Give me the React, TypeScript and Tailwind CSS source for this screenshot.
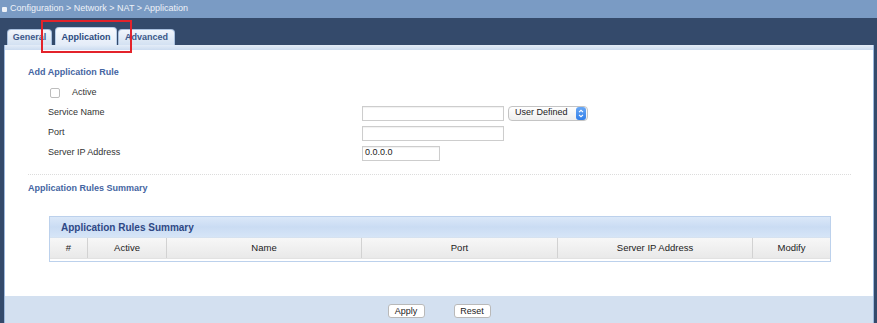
const columns = [
  { name: "#", w: "w-[38px]" },
  { name: "Active", w: "w-[79px]" },
  { name: "Name", w: "w-[195px]" },
  { name: "Port", w: "w-[196px]" },
  { name: "Server IP Address", w: "w-[195px]" },
  { name: "Modify", w: "flex-1" },
];

function TextInput({ width, value }: { width: string; value?: string }) {
  return (
    <div
      className={`${width} h-[15px] border border-[#cdcdcd] bg-white flex items-center px-[2px] text-[9px] text-[#222] shadow-[inset_0_1px_1px_rgba(0,0,0,0.06)]`}
    >
      {value}
    </div>
  );
}

function Stepper() {
  return (
    <div className="w-[10px] h-[13px] rounded-[3px] bg-gradient-to-b from-[#6aa8f5] to-[#2f7ee8] flex items-center justify-center">
      <svg width="6" height="9" viewBox="0 0 6 9" fill="none" stroke="white" strokeWidth="1.1">
        <path d="M1 3.2 L3 1.3 L5 3.2" />
        <path d="M1 5.8 L3 7.7 L5 5.8" />
      </svg>
    </div>
  );
}

function FormRow({ label, children }: { label: string; children?: React.ReactNode }) {
  return (
    <div className="h-[20px] flex items-center">
      <div className="w-[334px] pl-[20px] text-[9px] text-[#333]">{label}</div>
      {children}
    </div>
  );
}

export default function App() {
  return (
    <div className="relative w-[877px] h-[323px] bg-[#344a6b] flex flex-col font-['Liberation_Sans',Arial,sans-serif] overflow-hidden">
      {/* breadcrumb */}
      <div className="h-[18px] bg-[#7a9bc4] flex items-center pl-[2px] gap-[3px] text-[9px] text-[#eef2f8]">
        <div className="w-[5px] h-[5px] rounded-[1px] bg-[#eef2f8]" />
        <span>Configuration &gt; Network &gt; NAT &gt; Application</span>
      </div>

      {/* tabs */}
      <div className="h-[27px] flex items-end pl-[7px]">
        <div className="w-[45px] h-[16px] mr-[3px] rounded-t-[4px] border border-b-0 border-[#a9c0de] bg-gradient-to-b from-[#f1f5fb] to-[#d3e1f2] flex items-center justify-center text-[9px] font-bold text-[#3d5889]">
          General
        </div>
        <div className="w-[62px] h-[18px] mr-[1px] rounded-t-[4px] border border-b-0 border-[#b8cde8] bg-gradient-to-b from-[#f7f9fd] to-[#e4ecf8] flex items-center justify-center pt-[2px] text-[9px] font-bold text-[#2b4a7e]">
          Application
        </div>
        <div className="w-[57px] h-[16px] rounded-t-[4px] border border-b-0 border-[#a9c0de] bg-gradient-to-b from-[#f1f5fb] to-[#d3e1f2] flex items-center justify-center text-[9px] font-bold text-[#3d5889]">
          Advanced
        </div>
      </div>

      {/* panel */}
      <div className="flex-1 ml-[4px] mr-[3px] border-x border-[#9db8dc] flex flex-col">
        <div className="h-[5px] bg-gradient-to-b from-[#e4edf8] to-[#cddcf0]" />
        <div className="flex-1 bg-white pt-[12px] pl-[23px] pr-[22px]">
          <div className="h-[21px] flex items-center text-[9px] font-bold text-[#4565a2]">Add Application Rule</div>

          <div className="h-[20px] flex items-center pl-[22px]">
            <div className="w-[10px] h-[10px] rounded-[2px] border border-[#bdbdbd] bg-white" />
            <span className="ml-[12px] text-[9px] text-[#333]">Active</span>
          </div>

          <FormRow label="Service Name">
            <TextInput width="w-[142px]" />
            <div className="ml-[4px] w-[80px] h-[15px] rounded-[4px] border border-[#c4c4c4] bg-gradient-to-b from-white to-[#eeeeee] flex items-center justify-between pl-[6px] pr-px text-[9px] text-[#222]">
              <span>User Defined</span>
              <Stepper />
            </div>
          </FormRow>
          <FormRow label="Port">
            <TextInput width="w-[142px]" />
          </FormRow>
          <FormRow label="Server IP Address">
            <TextInput width="w-[78px]" value="0.0.0.0" />
          </FormRow>

          <div className="mt-[11px] border-t border-dotted border-[#dcdcdc]" />

          <div className="mt-[8px] h-[11px] flex items-center text-[9px] font-bold text-[#4565a2]">
            Application Rules Summary
          </div>

          {/* summary table */}
          <div className="mt-[22px] ml-[21px] w-[782px] border border-[#bcd1ec] bg-white">
            <div className="h-[20px] bg-gradient-to-b from-[#dbe8f8] via-[#cadcf3] to-[#d6e5f7] flex items-center pl-[11px] text-[10px] font-bold text-[#2e4885]">
              Application Rules Summary
            </div>
            <div className="h-[21px] flex border-t border-[#d6e2f0] bg-gradient-to-b from-[#f7f7f7] to-[#e9e9e9]">
              {columns.map((c, i) => (
                <div
                  key={c.name}
                  className={`${c.w} flex items-center justify-center text-[9.5px] text-[#222] ${i < columns.length - 1 ? "border-r border-[#d2d2d2]" : ""}`}
                >
                  {c.name}
                </div>
              ))}
            </div>
            <div className="h-[3px] bg-white border-t border-[#e2e2e2]" />
          </div>
        </div>

        {/* footer */}
        <div className="h-[27px] bg-[#d3e0f0] flex justify-center items-start pt-[8px] gap-[29px]">
          <button className="w-[37px] h-[14px] rounded-[3px] border border-[#b9b9b9] bg-white text-[9px] text-[#222] leading-none">
            Apply
          </button>
          <button className="w-[37px] h-[14px] rounded-[3px] border border-[#b9b9b9] bg-white text-[9px] text-[#222] leading-none">
            Reset
          </button>
        </div>
      </div>

      {/* highlight box */}
      <div className="absolute left-[41px] top-[20px] w-[91px] h-[33px] border-2 border-[#e3232b]" />
    </div>
  );
}
